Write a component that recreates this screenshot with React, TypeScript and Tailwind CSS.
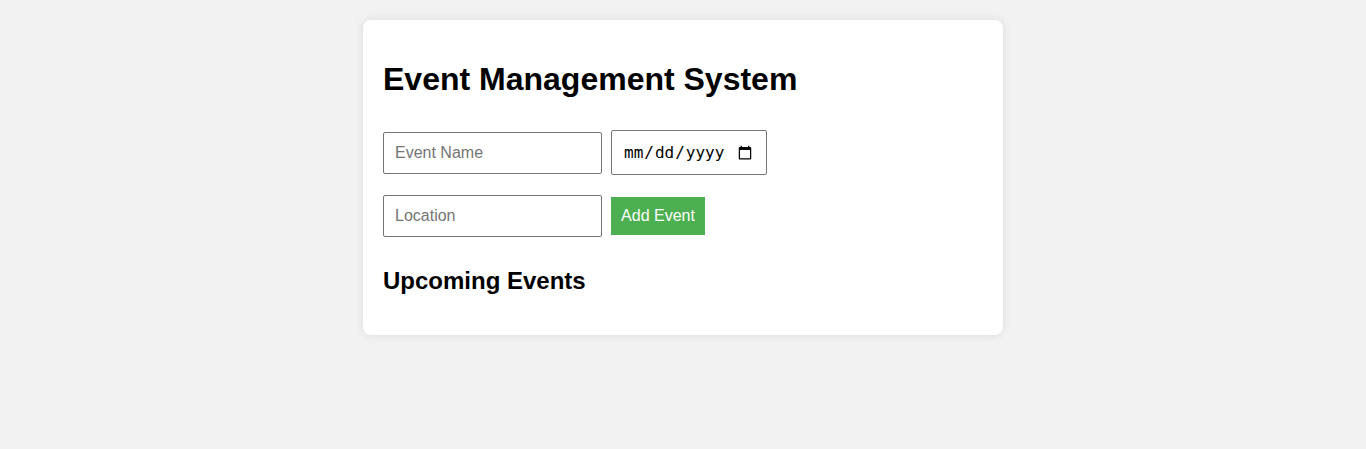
import React from "react";

export default function App() {
  return (
    <div className="min-h-screen bg-[#f2f2f2] pt-[20px] font-['Liberation_Sans',Arial,sans-serif] text-black">
      <div className="mx-auto w-[640px] rounded-[8px] bg-white px-[20px] pt-[41px] pb-[40px] shadow-[0_0_10px_rgba(0,0,0,0.1)]">
        <h1 className="text-[32px] font-bold leading-[37px]">Event Management System</h1>
        <div className="mt-[32px] flex items-center gap-[9px]">
          <input
            type="text"
            placeholder="Event Name"
            className="box-border h-[42px] w-[219px] rounded-[2px] border border-[#767676] px-[11px] text-[16px] outline-none placeholder:text-[#757575]"
          />
          <input
            type="date"
            className="box-border h-[45px] w-[156px] rounded-[2px] border border-[#767676] px-[11px] font-['DejaVu_Sans_Mono',monospace] text-[16px] outline-none"
          />
        </div>
        <div className="mt-[20px] flex items-center gap-[9px]">
          <input
            type="text"
            placeholder="Location"
            className="box-border h-[42px] w-[219px] rounded-[2px] border border-[#767676] px-[11px] text-[16px] outline-none placeholder:text-[#757575]"
          />
          <button className="box-border h-[38px] w-[94px] bg-[#4caf50] text-[16px] leading-[18px] text-white">
            Add Event
          </button>
        </div>
        <h2 className="mt-[30px] text-[24px] font-bold leading-[28px]">Upcoming Events</h2>
        <ul></ul>
      </div>
    </div>
  );
}
